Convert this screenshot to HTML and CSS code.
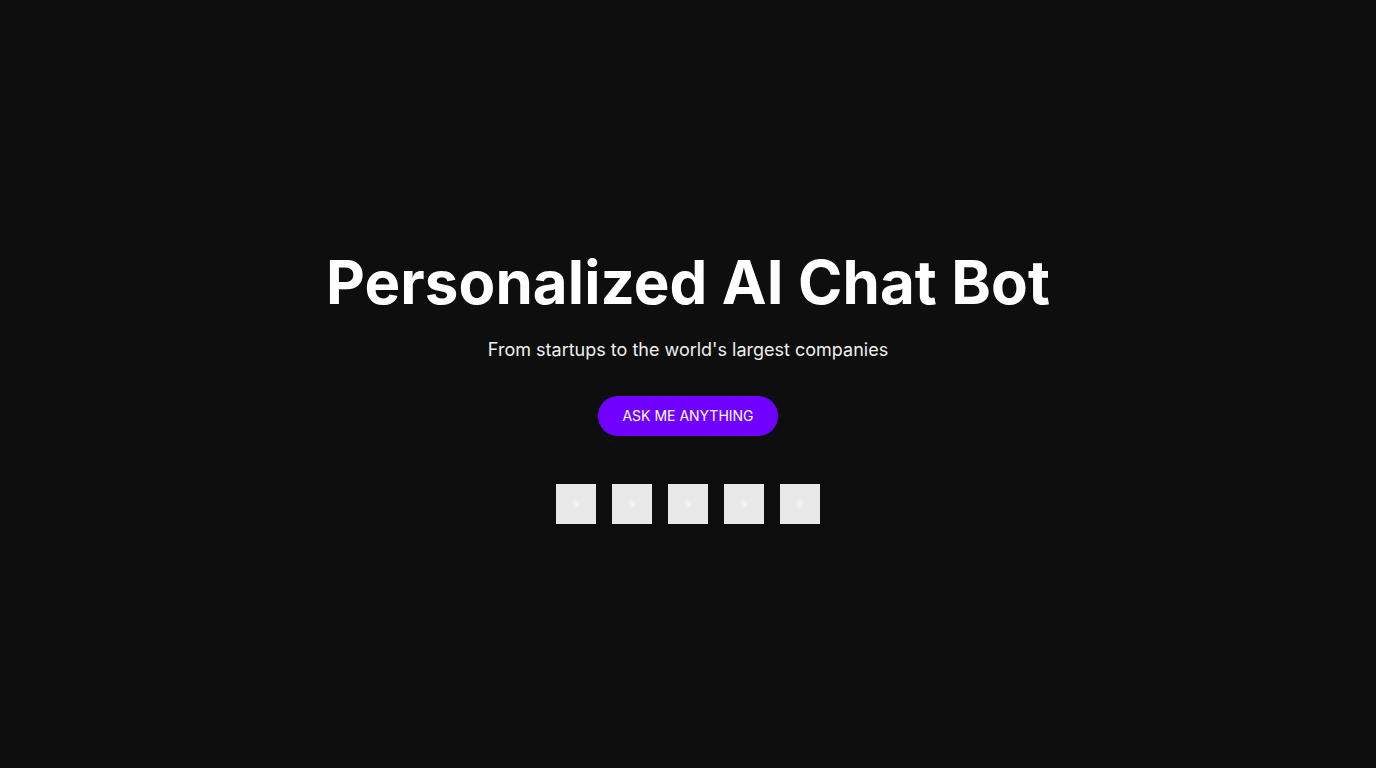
FILE: index.html
```html
<!DOCTYPE html>
<html lang="en">
<head>
<meta charset="utf-8">
<title>Personalized AI Chat Bot</title>
<link rel="stylesheet" href="styles.css">
</head>
<body>
<main class="hero">
  <h1 class="title">Personalized AI Chat Bot</h1>
  <p class="subtitle">From startups to the world's largest companies</p>
  <button class="cta">ASK ME ANYTHING</button>
  <div class="logos">
    <span class="logo"></span>
    <span class="logo"></span>
    <span class="logo"></span>
    <span class="logo"></span>
    <span class="logo"></span>
  </div>
</main>
</body>
</html>
```
FILE: styles.css
```css
html, body {
  margin: 0;
  padding: 0;
  height: 100%;
  background: #0e0e0e;
}
body {
  font-family: Inter, "Noto Sans", sans-serif;
  color: #fff;
}
.hero {
  box-sizing: border-box;
  height: 100%;
  padding-top: 1px;
  display: flex;
  flex-direction: column;
  align-items: center;
  justify-content: center;
}
.title {
  margin: 0;
  font-size: 60px;
  font-weight: 700;
  line-height: 72px;
  letter-spacing: 0.1px;
}
.subtitle {
  margin: 18px 0 0;
  font-size: 18px;
  line-height: 28px;
  color: #f0f0f0;
}
.cta {
  margin-top: 32px;
  width: 180px;
  height: 40px;
  border: none;
  border-radius: 20px;
  background: #7000ff;
  color: #fff;
  font-family: Inter, sans-serif;
  font-size: 14px;
  font-weight: 400;
  cursor: pointer;
}
.logos {
  margin-top: 48px;
  display: flex;
  gap: 16px;
}
.logo {
  width: 40px;
  height: 40px;
  background: radial-gradient(circle at 50% 50%, #f6f6f6 0, #eaeaea 4px, #e8e8e8 8px);
}
```
